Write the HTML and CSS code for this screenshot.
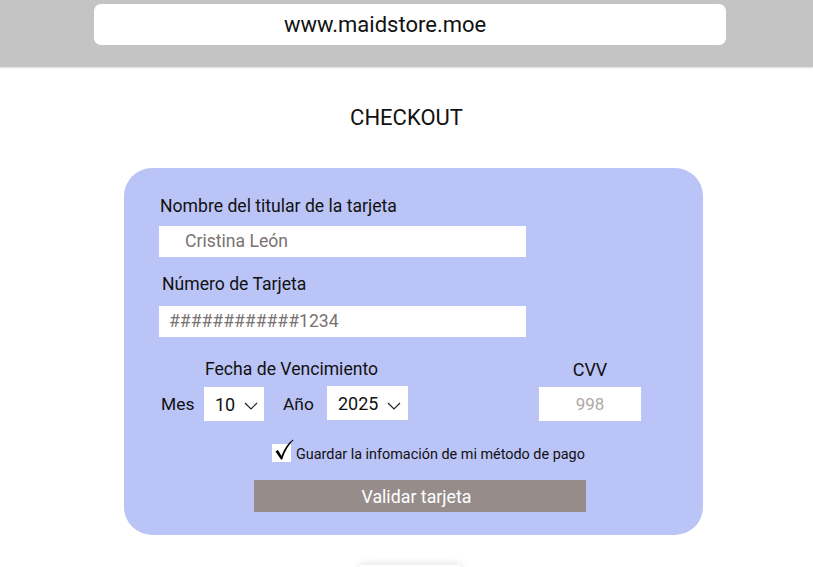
FILE: index.html
```html
<!DOCTYPE html>
<html lang="es">
<head>
<meta charset="utf-8">
<title>Checkout</title>
<link rel="stylesheet" href="styles.css">
</head>
<body>
<header class="topbar">
  <div class="urlbox">www.maidstore.moe</div>
</header>
<main class="main">
  <h1 class="title">CHECKOUT</h1>
  <form class="card">
    <label class="label label-name">Nombre del titular de la tarjeta</label>
    <div class="input input-name">Cristina León</div>
    <label class="label label-number">Número de Tarjeta</label>
    <div class="input input-number">############1234</div>
    <div class="expiry-row">
      <div class="expiry">
        <div class="label expiry-title">Fecha de Vencimiento</div>
        <div class="selects">
          <span class="sel-label">Mes</span>
          <div class="select sel-month"><span>10</span><svg class="chev" width="14" height="8" viewBox="0 0 14 8"><path d="M1 1 L7 7 L13 1" fill="none" stroke="#222" stroke-width="1.2"/></svg></div>
          <span class="sel-label sel-label-year">Año</span>
          <div class="select sel-year"><span>2025</span><svg class="chev" width="14" height="8" viewBox="0 0 14 8"><path d="M1 1 L7 7 L13 1" fill="none" stroke="#222" stroke-width="1.2"/></svg></div>
        </div>
      </div>
      <div class="cvv">
        <div class="label cvv-title">CVV</div>
        <div class="cvv-box">998</div>
      </div>
    </div>
    <div class="save-row">
      <span class="checkbox"><svg class="check" width="20" height="22" viewBox="0 0 20 22"><path d="M1.5 12.5 L4 11 L7.5 17 C10 10 14 4 19 0.5 L19.5 1.2 C14.5 6 11 12 8.2 20.5 L7 20.5 Z" fill="#000"/></svg></span>
      <span class="save-text">Guardar la infomación de mi método de pago</span>
    </div>
    <button type="button" class="btn">Validar tarjeta</button>
  </form>
  <div class="footer-tab"></div>
</main>
</body>
</html>
```
FILE: styles.css
```css
html, body {
  margin: 0;
  padding: 0;
  background: #ffffff;
  font-family: Roboto, "Liberation Sans", sans-serif;
  color: #111;
  overflow: hidden;
  height: 567px;
}
.topbar {
  height: 67px;
  background: #c4c4c4;
  padding-top: 4px;
  box-sizing: border-box;
  box-shadow: 0 1px 2px rgba(0,0,0,0.15);
}
.urlbox {
  margin-left: 94px;
  width: 632px;
  height: 41px;
  background: #fff;
  border-radius: 7px;
  box-sizing: border-box;
  padding-left: 190px;
  font-size: 22px;
  line-height: 41px;
  color: #111;
}
.main {
  display: flex;
  flex-direction: column;
}
.title {
  margin: 37px 0 0 0;
  text-align: center;
  font-weight: 400;
  font-size: 22px;
  line-height: 28px;
  color: #111;
  width: 813px;
}
.card {
  margin: 36px 0 0 124px;
  width: 579px;
  height: 367px;
  box-sizing: border-box;
  background: #bbc4f7;
  border-radius: 28px;
  display: flex;
  flex-direction: column;
  padding: 27px 0 0 35px;
}
.label {
  font-size: 17.6px;
  line-height: 22px;
  color: #111;
}
.label-name { margin-left: 1px; }
.input {
  width: 367px;
  height: 31px;
  background: #fff;
  box-sizing: border-box;
  font-size: 17.6px;
  line-height: 31px;
  color: #7a7272;
  margin-top: 9px;
}
.input-name { padding-left: 26px; }
.label-number { margin: 16px 0 0 3px; }
.input-number { padding-left: 10px; margin-top: 11px; }
.expiry-row {
  display: flex;
  margin-top: 21px;
}
.expiry {
  display: flex;
  flex-direction: column;
}
.expiry-title { margin-left: 46px; }
.selects {
  display: flex;
  align-items: flex-start;
  margin-top: 7px;
}
.sel-label {
  font-size: 17.4px;
  line-height: 34px;
  margin-left: 2px;
  width: 43px;
}
.sel-label-year {
  margin-left: 19px;
  width: 44px;
}
.select {
  height: 34px;
  background: #fff;
  display: flex;
  align-items: center;
  font-size: 18px;
  color: #111;
  box-sizing: border-box;
}
.sel-month { width: 60px; padding-left: 11px; }
.sel-month .chev { margin-left: 9px; margin-top: 4px; }
.sel-year { width: 81px; padding-left: 11px; margin-top: -1px; }
.sel-year .chev { margin-left: 9px; margin-top: 6px; }
.cvv {
  display: flex;
  flex-direction: column;
  margin-left: 131px;
  width: 102px;
  align-items: center;
}
.cvv-title { margin-top: 1px; font-size: 18px; }
.cvv-box {
  width: 102px;
  height: 34px;
  background: #fff;
  margin-top: 6px;
  text-align: center;
  font-size: 17px;
  line-height: 34px;
  color: #b0a8a8;
}
.save-row {
  display: flex;
  align-items: center;
  margin: 23px 0 0 113px;
  height: 18px;
}
.checkbox {
  width: 19px;
  height: 18px;
  background: #fff;
  position: relative;
  flex: none;
}
.check {
  position: absolute;
  left: 2px;
  top: -5px;
}
.save-text {
  font-size: 14.4px;
  line-height: 18px;
  margin-left: 5px;
  margin-top: 3px;
  color: #111;
}
.btn {
  margin: 18px 0 0 95px;
  width: 332px;
  height: 32px;
  border: none;
  background: #968c8a;
  color: #fff;
  font-family: Roboto, "Liberation Sans", sans-serif;
  font-size: 17.8px;
  padding: 0 7px 0 0;
}
.footer-tab {
  margin: 30px 0 0 360px;
  width: 100px;
  height: 30px;
  background: #fff;
  box-shadow: 0 0 10px rgba(0,0,0,0.15);
}
```
